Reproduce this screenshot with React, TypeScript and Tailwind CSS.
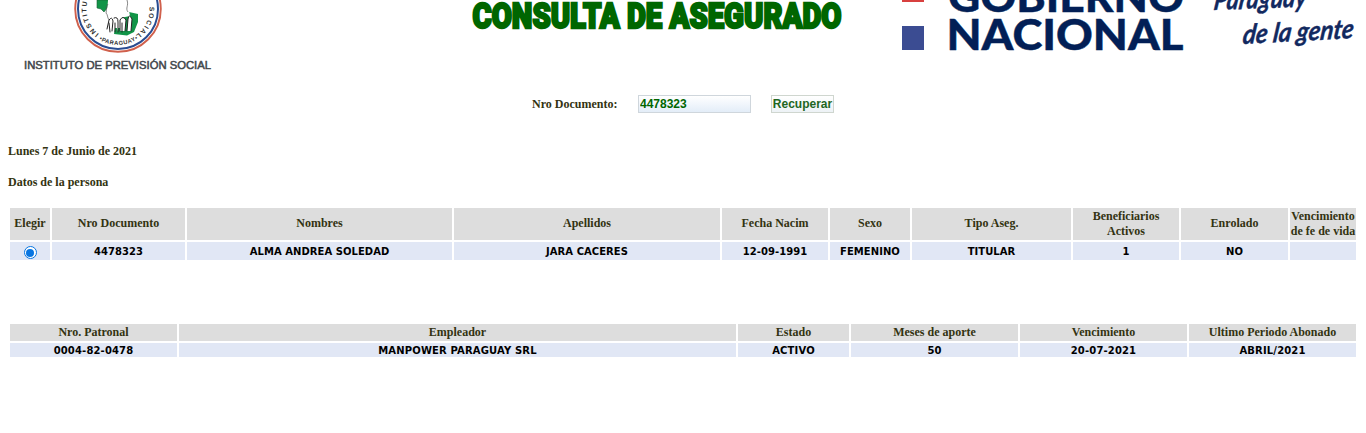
import React from "react";

const people = [
  { h: "Elegir", v: null },
  { h: "Nro Documento", v: "4478323" },
  { h: "Nombres", v: "ALMA ANDREA SOLEDAD" },
  { h: "Apellidos", v: "JARA CACERES" },
  { h: "Fecha Nacim", v: "12-09-1991" },
  { h: "Sexo", v: "FEMENINO" },
  { h: "Tipo Aseg.", v: "TITULAR" },
  { h: "Beneficiarios Activos", v: "1", wrap: true },
  { h: "Enrolado", v: "NO" },
  { h: "Vencimiento de fe de vida", v: "", wrap: true },
];

const jobs = [
  { h: "Nro. Patronal", v: "0004-82-0478" },
  { h: "Empleador", v: "MANPOWER PARAGUAY SRL" },
  { h: "Estado", v: "ACTIVO" },
  { h: "Meses de aporte", v: "50" },
  { h: "Vencimiento", v: "20-07-2021" },
  { h: "Ultimo Periodo Abonado", v: "ABRIL/2021" },
];

function Seal() {
  return (
    <svg width="220" height="80" viewBox="0 0 220 80" className="block">
      <defs>
        <path id="rimOut" d="M118 40.500 a31.500 31.500 0 0 1 0 -63 a31.500 31.500 0 0 1 0 63" />
        <path id="rimIn" d="M82 9 a36 36 0 0 0 72 0" />
      </defs>
      <circle cx="118" cy="9" r="42.800" fill="#fff" stroke="#d0604c" strokeWidth="1.900" />
      <circle cx="118" cy="9" r="40" fill="none" stroke="#294c91" strokeWidth="2" />
      <path d="M97 0 L109 0 L108 7 L104 12 L101 9 L97 8 Z" fill="#119447" stroke="#1d5a38" strokeWidth="0.600" />
      <path d="M122 17 L129 12 L138 14 L138 22 L134 32 L127 35.500 L114 34 L115 28 L122 28 Z" fill="#119447" />
      <path d="M108 0 L107 13 L110 20 L130 16 L127 0 Z" fill="#fff" />
      <path d="M108 4 C105 8 107 10 106 13 C108 15 107 17 109 20 M127 0 C129 6 125 8 128 12" fill="none" stroke="#555" strokeWidth="0.700" />
      <g fill="#fff" stroke="#222" strokeWidth="1" strokeLinecap="round">
        <path d="M107 29 L109 20 Q112 16 113 21 L112 31 M109 23 L110 32 M114 18 Q118 16 118 22 L118 32 M115 23 L115 32" />
        <path d="M120 31 L120 20 Q123 15 126 20 L125 31 M122 23 L122 32 M127 31 L128 19 Q129 13 132 19 L131 31" />
      </g>
      <g fontFamily="Liberation Sans, sans-serif" fontSize="6.800" fontWeight="700" fill="#333">
        <text textLength="36">
          <textPath href="#rimOut" startOffset="20.500">INSTITU</textPath>
        </text>
        <text fontSize="5.800">
          <textPath href="#rimIn" startOffset="36.500" textLength="41">•PARAGUAY•</textPath>
        </text>
        <text textLength="33">
          <textPath href="#rimOut" startOffset="146">SOCIAL</textPath>
        </text>
      </g>
      <text x="24" y="69" textLength="187" lengthAdjust="spacingAndGlyphs" fontFamily="Liberation Sans, sans-serif" fontSize="10.800" fontWeight="400" fill="#42484c" stroke="#42484c" strokeWidth="0.500">
        INSTITUTO DE PREVISIÓN SOCIAL
      </text>
    </svg>
  );
}

function Government() {
  return (
    <svg width="466" height="60" viewBox="0 0 466 60" className="block">
      <rect x="2" y="0" width="22" height="2" fill="#d8403f" />
      <rect x="2" y="26" width="22" height="24" fill="#3b4c92" />
      <g fontFamily="Lato, sans-serif" fontWeight="900" fontSize="41.500" fill="#021f56" stroke="#021f56" strokeWidth="0.400">
        <text x="48" y="11.500" textLength="236" lengthAdjust="spacingAndGlyphs">GOBIERNO</text>
        <text x="46.500" y="49.500" textLength="237" lengthAdjust="spacingAndGlyphs">NACIONAL</text>
      </g>
      <g fontFamily="Lato, sans-serif" fontStyle="italic" fontWeight="700" fill="#12295f" stroke="#12295f" strokeWidth="0.400">
        <text transform="translate(313 10) rotate(-2) skewX(-10)" fontSize="29" textLength="93" lengthAdjust="spacingAndGlyphs">Paraguay</text>
        <text transform="translate(342 44) rotate(-3) skewX(-10)" fontSize="27" textLength="111" lengthAdjust="spacingAndGlyphs">de la gente</text>
      </g>
    </svg>
  );
}

const head = "flex items-center justify-center text-center bg-[#dddddd] font-['Liberation_Serif',serif] text-[12px] leading-[15px] font-bold text-[#333311]";
const cell = "flex items-center justify-center bg-[#e1e7f5] pt-0.5 font-['DejaVu_Sans',sans-serif] text-[10px] leading-[14px] font-bold whitespace-nowrap text-black";

export default function App() {
  return (
    <main className="h-[433px] overflow-hidden bg-white font-['Liberation_Serif',serif] text-[12px] font-bold text-[#333311]">
      <header className="flex h-20 justify-between">
        <Seal />
        <h1 className="flex h-9 w-[374px] translate-x-[97px] items-start justify-center">
          <svg width="374" height="36" viewBox="0 0 374 36" className="block">
            <text x="2.500" y="27.800" textLength="369" lengthAdjust="spacingAndGlyphs" fontFamily="Roboto, sans-serif" fontWeight="900" fontSize="34.500" fill="#006600" stroke="#006600" strokeWidth="2.400">
              CONSULTA DE ASEGURADO
            </text>
          </svg>
        </h1>
        <Government />
      </header>

      <form className="flex h-16 items-start pt-[15px] pl-[532px]">
        <label htmlFor="doc" className="w-[106px] leading-[18px]">Nro Documento:</label>
        <input
          id="doc"
          defaultValue="4478323"
          className="mr-5 h-[18px] w-[113px] border border-[#cfd6dc] bg-linear-to-b from-white to-[#e3edf8] px-px font-['Liberation_Sans',sans-serif] text-[12px] font-bold text-[#006600]"
        />
        <button type="button" className="h-[18px] w-[63px] border border-[#cfd6cf] bg-linear-to-b from-white to-[#edf2f6] font-['Liberation_Sans',sans-serif] text-[12px] leading-4 font-bold text-[#226622]">
          Recuperar
        </button>
      </form>

      <p className="pl-2 leading-[15px]">Lunes 7 de Junio de 2021</p>
      <p className="mt-4 pl-2 leading-[15px]">Datos de la persona</p>

      <section className="mt-[18px] ml-2.5 grid w-[1346px] grid-cols-[40px_133px_265px_266px_106px_80px_159px_106px_107px_66px] grid-rows-[32px_18px] gap-0.5">
        {people.map((p) => (
          <div key={p.h} className={`${head} ${p.wrap ? "pb-0" : "pb-0.5"}`}>{p.h}</div>
        ))}
        {people.map((p) => (
          <div key={p.h} className={`${cell} tracking-[0.05px]`}>
            {p.v === null ? (
              <span className="mt-px flex size-[13px] items-center justify-center rounded-full border border-[#0875e1] bg-white">
                <span className="size-2 rounded-full bg-[#0875e1]" />
              </span>
            ) : p.v}
          </div>
        ))}
      </section>

      <section className="mt-16 ml-2.5 grid w-[1346px] grid-cols-[167px_557px_111px_167px_167px_167px] grid-rows-[17px_14px] gap-0.5">
        {jobs.map((j) => (
          <div key={j.h} className={head}>{j.h}</div>
        ))}
        {jobs.map((j) => (
          <div key={j.h} className={`${cell} tracking-[0.15px]`}>{j.v}</div>
        ))}
      </section>
    </main>
  );
}
